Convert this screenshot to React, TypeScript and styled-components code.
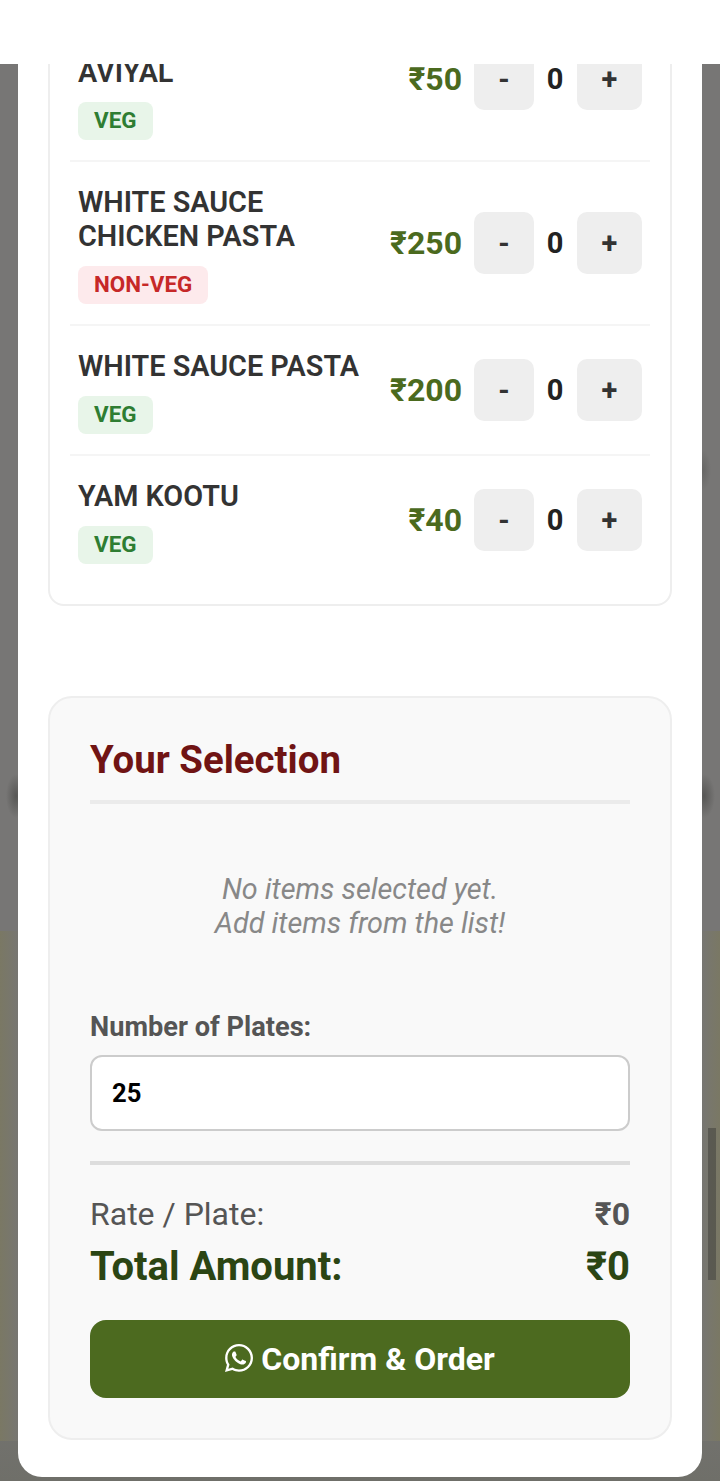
import React from "react";
import styled, { createGlobalStyle } from "styled-components";
import { FaWhatsapp } from "react-icons/fa";

const Global = createGlobalStyle`
  html, body { margin: 0; padding: 0; background: #fff; }
  * { box-sizing: border-box; }
  body { font-family: Roboto, "Liberation Sans", sans-serif; }
`;

const Screen = styled.div`
  position: relative;
  width: 720px;
  height: 1481px;
  display: flex;
  flex-direction: column;
  overflow: hidden;
`;
const TopBar = styled.div`
  height: 64px;
  flex: none;
  background: #fff;
`;
const Backdrop = styled.div`
  flex: 1;
  min-height: 0;
  display: flex;
  padding: 0 18px 4px;
  background-color: #777675;
  background-image:
    radial-gradient(ellipse 10px 22px at 16px 732px, rgba(70, 70, 68, 0.65), transparent),
    radial-gradient(ellipse 11px 22px at 704px 732px, rgba(70, 70, 68, 0.65), transparent),
    radial-gradient(ellipse 8px 20px at 703px 406px, rgba(80, 80, 78, 0.4), transparent),
    linear-gradient(90deg, #7a7864 0, #777672 18px, #777672 702px, #7a7864 720px),
    linear-gradient(180deg, #777675 0, #777675 1280px, #6f6f69 1417px);
  background-repeat: no-repeat;
  background-size: 100% 100%, 100% 100%, 100% 100%, 100% 510px, 100% 100%;
  background-position: 0 0, 0 0, 0 0, 0 867px, 0 0;
`;
const Modal = styled.div`
  flex: 1;
  min-width: 0;
  display: flex;
  flex-direction: column;
  justify-content: flex-end;
  overflow: hidden;
  background: #fff;
  border-radius: 0 0 24px 24px;
  padding: 0 30px 37px;
`;
const MenuCard = styled.div`
  flex: none;
  border: 2px solid #eee;
  border-radius: 16px;
  padding: 0 20px 20px;
  margin-bottom: 90px;
`;
const Row = styled.div`
  display: flex;
  align-items: center;
  justify-content: space-between;
  padding: 21px 8px 20px;
  border-bottom: 2px solid #f5f5f5;
  &:last-child { border-bottom: none; }
`;
const ItemInfo = styled.div`
  flex: 1;
  min-width: 0;
  padding: 2px 10px 0 0;
`;
const ItemName = styled.div<{ $lowered?: boolean }>`
  font-size: 28.8px;
  line-height: 34px;
  font-weight: 600;
  color: #333;
  margin-bottom: 13px;
  padding-top: ${(p) => (p.$lowered ? 34 : 0)}px;
`;
const Tag = styled.span<{ $nonVeg?: boolean }>`
  display: block;
  width: fit-content;
  height: 38px;
  line-height: 36px;
  padding: 0 16px;
  border-radius: 8px;
  font-size: 22.4px;
  font-weight: 700;
  color: ${(p) => (p.$nonVeg ? "#c62828" : "#2e7d32")};
  background: ${(p) => (p.$nonVeg ? "#fdeaec" : "#e8f5e9")};
`;
const Price = styled.div`
  flex: none;
  font-size: 32px;
  font-weight: 700;
  color: #4b6a1e;
  margin: 0 12px 2px 0;
`;
const Stepper = styled.div`
  flex: none;
  display: flex;
  align-items: center;
  margin-bottom: 2px;
`;
const StepButton = styled.div<{ $wide?: boolean }>`
  width: ${(p) => (p.$wide ? 65 : 60)}px;
  height: 62px;
  display: flex;
  align-items: center;
  justify-content: center;
  background: #eee;
  border-radius: 10px;
  font-size: 29px;
  font-weight: 700;
  color: #333;
`;
const Count = styled.div`
  width: 42px;
  text-align: center;
  font-size: 29px;
  font-weight: 700;
  color: #222;
  margin-right: 1px;
`;

const SelectionCard = styled.div`
  flex: none;
  height: 744px;
  background: #f9f9f9;
  border: 2px solid #eee;
  border-radius: 24px;
  padding: 40px;
`;
const Heading = styled.h2`
  margin: 0;
  font-size: 38.4px;
  line-height: 44px;
  font-weight: 700;
  color: #701414;
  padding-bottom: 18px;
  border-bottom: 4px solid #ebebeb;
`;
const Empty = styled.div`
  margin-top: 68px;
  text-align: center;
  font-size: 28.8px;
  line-height: 34px;
  font-style: italic;
  font-weight: 400;
  color: #888;
`;
const FieldLabel = styled.div`
  margin-top: 71px;
  font-size: 27.2px;
  line-height: 32px;
  font-weight: 700;
  color: #555;
`;
const PlatesInput = styled.div`
  margin-top: 12px;
  height: 76px;
  display: flex;
  align-items: center;
  padding: 0 20px;
  background: #fff;
  border: 2px solid #ccc;
  border-radius: 12px;
  font-size: 25.6px;
  font-weight: 700;
  color: #000;
`;
const Summary = styled.div`
  margin-top: 30px;
  padding-top: 29px;
  border-top: 4px solid #ddd;
`;
const RateRow = styled.div`
  display: flex;
  justify-content: space-between;
  align-items: center;
  height: 40px;
  font-size: 32px;
  color: #555;
  font-weight: 400;
`;
const RateValue = styled.span`
  font-weight: 700;
`;
const TotalRow = styled.div`
  display: flex;
  justify-content: space-between;
  align-items: center;
  height: 48px;
  margin-top: 8px;
  font-size: 40px;
  font-weight: 700;
  color: #2b4513;
`;
const Confirm = styled.div`
  margin-top: 30px;
  height: 78px;
  display: flex;
  align-items: center;
  justify-content: center;
  gap: 5px;
  background: #4c6a1f;
  border-radius: 16px;
  color: #fff;
  font-size: 32px;
  font-weight: 700;
  svg { margin: -2px 1px 0 -2px; }
`;
const Scrollbar = styled.div`
  position: absolute;
  left: 708px;
  top: 1128px;
  width: 8px;
  height: 152px;
  background: rgba(60, 60, 55, 0.5);
`;

const items = [
  { name: "AVIYAL", price: 50, veg: true, lowered: true },
  { name: "WHITE SAUCE CHICKEN PASTA", price: 250, veg: false },
  { name: "WHITE SAUCE PASTA", price: 200, veg: true },
  { name: "YAM KOOTU", price: 40, veg: true },
];

export default function App() {
  return (
    <Screen>
      <Global />
      <TopBar />
      <Backdrop>
        <Modal>
          <MenuCard>
            {items.map((it) => (
              <Row key={it.name}>
                <ItemInfo>
                  <ItemName $lowered={it.lowered}>{it.name}</ItemName>
                  <Tag $nonVeg={!it.veg}>{it.veg ? "VEG" : "NON-VEG"}</Tag>
                </ItemInfo>
                <Price>₹{it.price}</Price>
                <Stepper>
                  <StepButton>-</StepButton>
                  <Count>0</Count>
                  <StepButton $wide>+</StepButton>
                </Stepper>
              </Row>
            ))}
          </MenuCard>
          <SelectionCard>
            <Heading>Your Selection</Heading>
            <Empty>
              No items selected yet.
              <br />
              Add items from the list!
            </Empty>
            <FieldLabel>Number of Plates:</FieldLabel>
            <PlatesInput>25</PlatesInput>
            <Summary>
              <RateRow>
                <span>Rate / Plate:</span>
                <RateValue>₹0</RateValue>
              </RateRow>
              <TotalRow>
                <span>Total Amount:</span>
                <span>₹0</span>
              </TotalRow>
            </Summary>
            <Confirm>
              <FaWhatsapp size={32} />
              <span>Confirm &amp; Order</span>
            </Confirm>
          </SelectionCard>
        </Modal>
      </Backdrop>
      <Scrollbar />
    </Screen>
  );
}
